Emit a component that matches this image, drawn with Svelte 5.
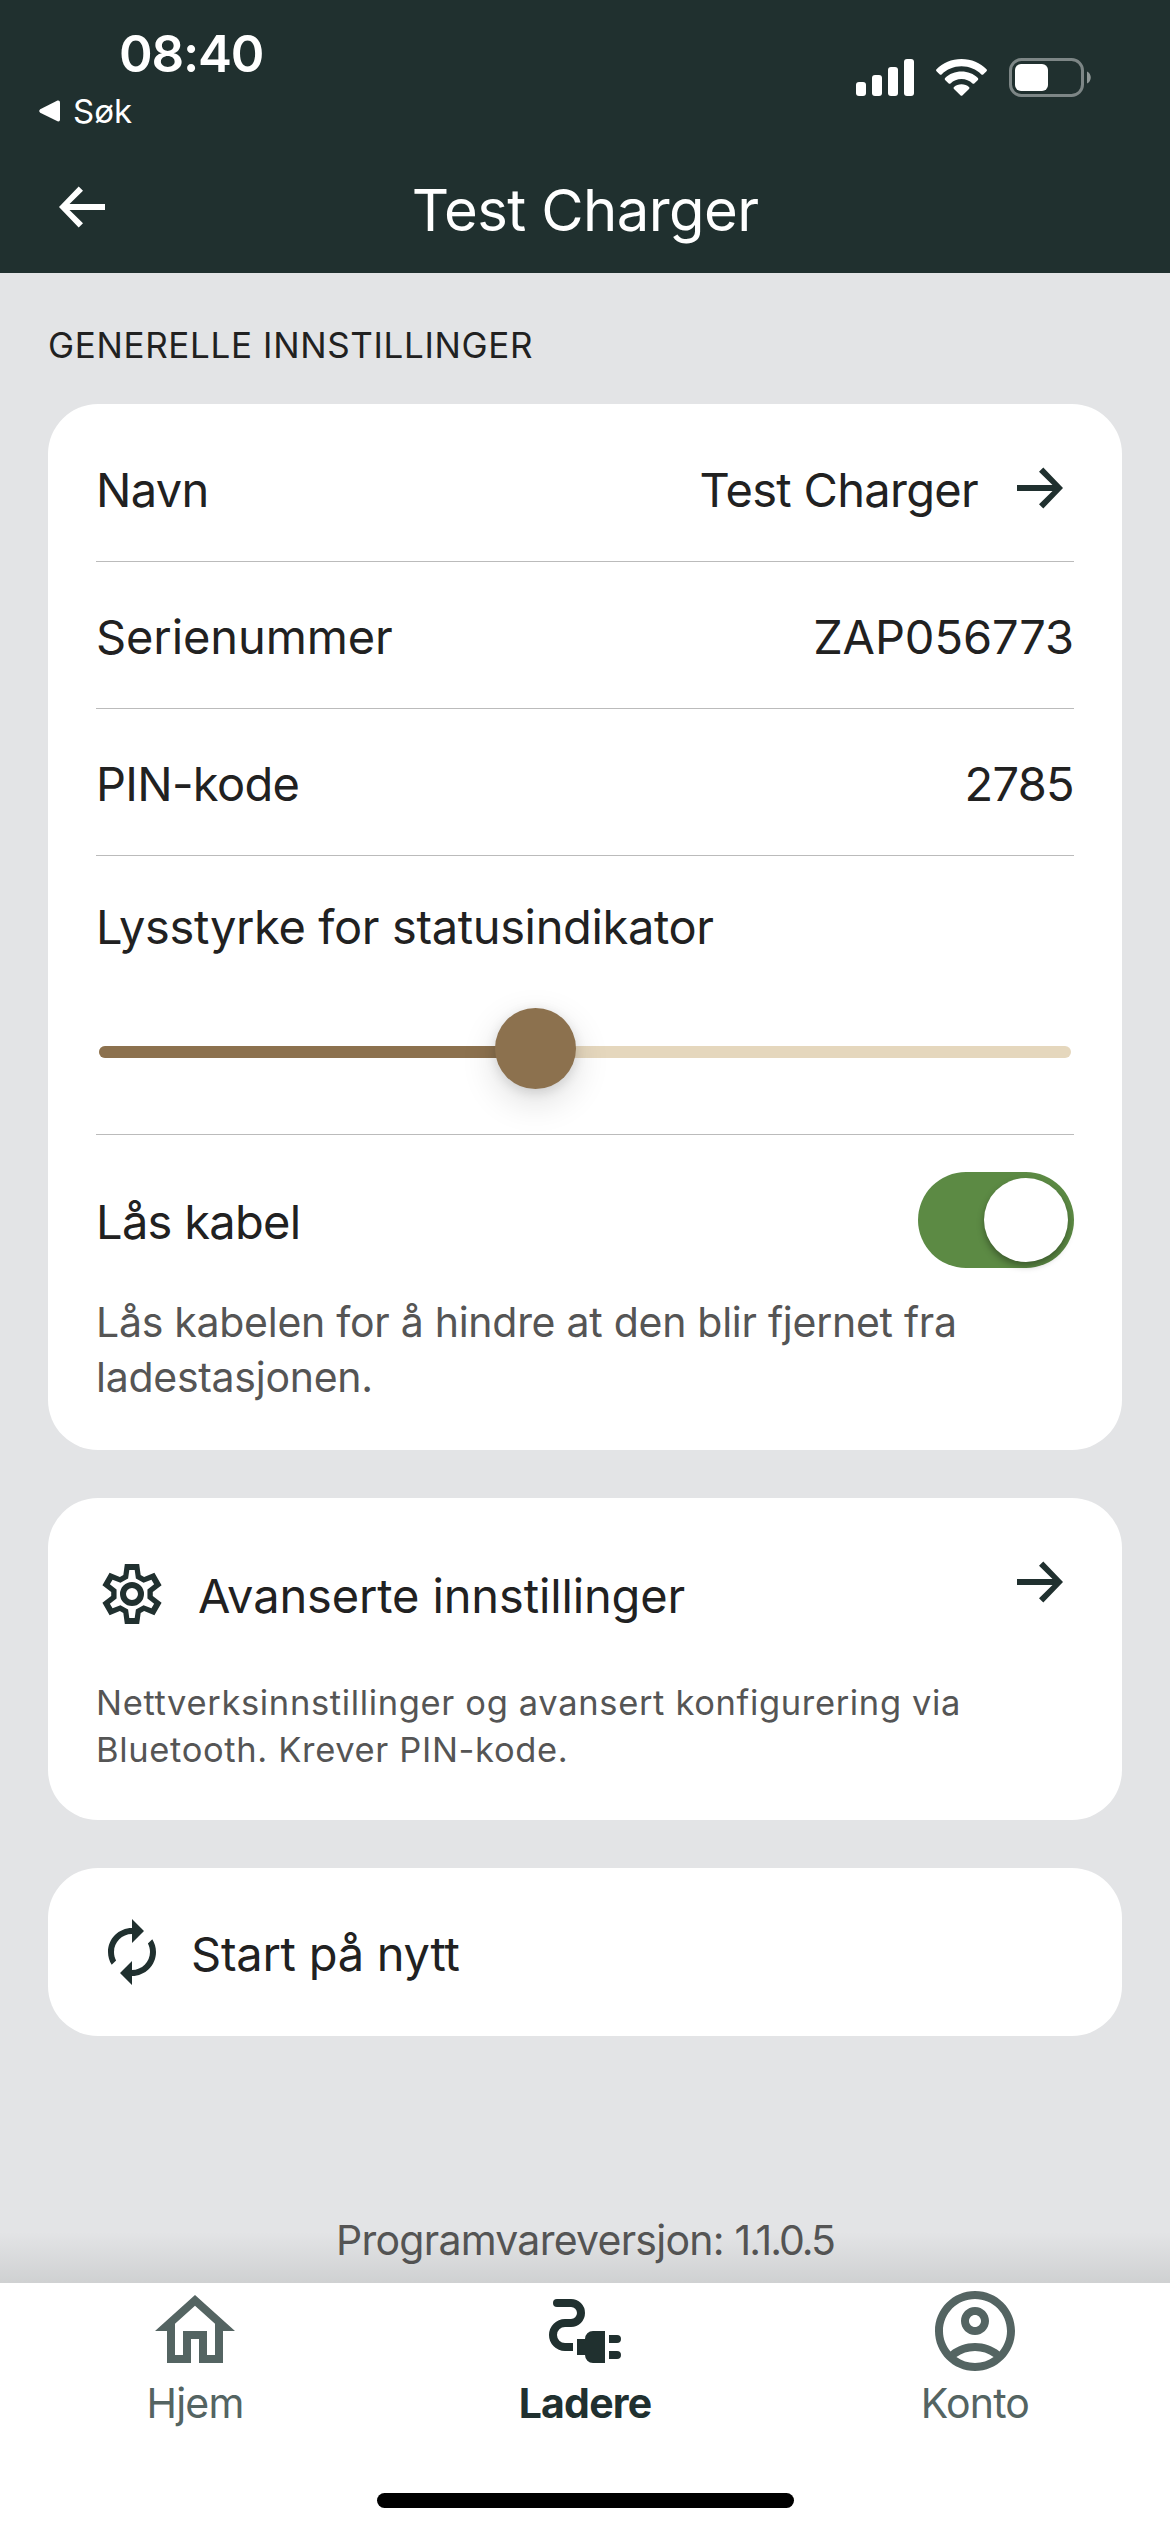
<script>
  // Charger settings screen
  let brightness = $state(45);
  let cableLocked = $state(true);

  const info = [
    { id: 'name', label: 'Navn', value: 'Test Charger', link: true },
    { id: 'serial', label: 'Serienummer', value: 'ZAP056773' },
    { id: 'pin', label: 'PIN-kode', value: '2785' }
  ];

  const tabs = [
    { id: 'home', label: 'Hjem' },
    { id: 'chargers', label: 'Ladere', active: true },
    { id: 'account', label: 'Konto' }
  ];

  const bars = [14, 21, 29, 37];

  // One tooth is given as [x, y] points above the centre, repeated six times
  function ring(tooth) {
    const points = [];
    for (let i = 0; i < 6; i++) {
      const a = (i * Math.PI) / 3;
      for (const [x, y] of tooth) {
        const px = 12 + x * Math.cos(a) - y * Math.sin(a);
        const py = 12 + x * Math.sin(a) + y * Math.cos(a);
        points.push(`${px.toFixed(2)} ${py.toFixed(2)}`);
      }
    }
    return `M${points.join('L')}z`;
  }

  const gear =
    ring([[-2.89, -6.33], [-2.39, -10], [2.39, -10], [2.89, -6.33]]) +
    ring([[-1.3, -5.2], [-0.9, -8], [0.9, -8], [1.3, -5.2]]);
</script>

{#snippet arrow()}
  <svg class="arrow" viewBox="0 0 72 72" aria-hidden="true">
    <path d="M15 33h35.500L37 19.800l4.300-4.300L61 36 41.300 56.500 37 52.200 50.500 39H15z" />
  </svg>
{/snippet}

<div class="screen">
  <header>
    <div class="status">
      <div class="status-left">
        <span class="time">08:40</span>
        <span class="back-app">
          <svg viewBox="0 0 22 22" aria-hidden="true"><path d="M1.200 9.200 18.500.600Q21 0 21 2.500v17Q21 22 18.500 21.300L1.200 12.700Q-.800 11 1.200 9.200z" /></svg>
          <span>Søk</span>
        </span>
      </div>
      <div class="status-right">
        <div class="signal">
          {#each bars as h}
            <i style="height: {h}px"></i>
          {/each}
        </div>
        <svg class="wifi" viewBox="0 0 51 37" aria-hidden="true">
          <path d="M25.500 0C35.500 0 44.300 3.900 50.500 10.200q.900 1 0 2L47.200 15.400q-.900.800-1.800 0C40.200 10.300 33.200 7.300 25.500 7.300S10.800 10.300 5.600 15.400q-.900.800-1.800 0L.500 12.200q-.900-1 0-2C6.700 3.900 15.500 0 25.500 0z" />
          <path d="M25.500 12.600c6.300 0 12.100 2.400 16.400 6.400q.900 1 0 2L38.300 24.400q-.900.800-1.800 0C33.600 21.700 29.700 20.100 25.500 20.100S17.400 21.700 14.500 24.400q-.900.800-1.800 0L9.100 21q-.900-1 0-2C13.400 15 19.200 12.600 25.500 12.600z" />
          <path d="M25.500 25.200c2.900 0 5.500 1 7.500 2.700q.900 1 0 2L26.600 36.200q-1.100 1.100-2.200 0L18 29.900q-.900-1 0-2C20 26.200 22.600 25.200 25.500 25.200z" />
        </svg>
        <svg class="battery" viewBox="0 0 83 39" aria-hidden="true">
          <rect x="1.500" y="1.500" width="72" height="36" rx="11" fill="none" stroke="#fff" stroke-opacity=".42" stroke-width="3" />
          <rect x="6" y="6" width="33" height="27" rx="6" />
          <path d="M78 13.500c5 2 5 10 0 12z" fill-opacity=".5" />
        </svg>
      </div>
    </div>
    <div class="bar">
      <button class="back" type="button" aria-label="Tilbake">{@render arrow()}</button>
      <h1>Test Charger</h1>
    </div>
  </header>

  <main>
    <h2>GENERELLE INNSTILLINGER</h2>

    <section class="card general">
      {#each info as row (row.id)}
        <div class="row {row.id}">
          <span>{row.label}</span>
          <span class="value">{row.value}</span>
          {#if row.link}
            {@render arrow()}
          {/if}
        </div>
      {/each}

      <div class="brightness">
        <span class="label">Lysstyrke for statusindikator</span>
        <div class="slider">
          <div class="track">
            <div class="fill" style="width: {brightness}%"></div>
          </div>
          <div class="thumb" style="left: {brightness}%"></div>
        </div>
      </div>

      <div class="lock">
        <span class="label">Lås kabel</span>
        <button
          class="toggle"
          class:on={cableLocked}
          type="button"
          role="switch"
          aria-checked={cableLocked}
          aria-label="Lås kabel"
          onclick={() => (cableLocked = !cableLocked)}
        ><span class="knob"></span></button>
      </div>
      <p class="lock-text">Lås kabelen for å hindre at den blir fjernet fra<br />ladestasjonen.</p>
    </section>

    <section class="card advanced">
      <div class="advanced-head">
        <svg class="icon" viewBox="0 0 24 24" aria-hidden="true">
          <path d={gear} fill-rule="evenodd" />
          <circle cx="12" cy="12" r="3" fill="none" stroke="currentColor" stroke-width="2" />
        </svg>
        <span>Avanserte innstillinger</span>
        {@render arrow()}
      </div>
      <p class="advanced-text">Nettverksinnstillinger og avansert konfigurering via<br />Bluetooth. Krever PIN-kode.</p>
    </section>

    <section class="card restart">
      <svg class="icon" viewBox="0 0 24 24" aria-hidden="true">
        <path d="M12 6v3l4-4-4-4v3c-4.420 0-8 3.580-8 8 0 1.570.46 3.030 1.240 4.260L6.700 14.800c-.45-.83-.7-1.790-.7-2.800 0-3.310 2.690-6 6-6zm6.760 1.740L17.300 9.200c.44.84.7 1.790.7 2.800 0 3.310-2.690 6-6 6v-3l-4 4 4 4v-3c4.420 0 8-3.580 8-8 0-1.570-.46-3.030-1.240-4.260z" />
      </svg>
      <span>Start på nytt</span>
    </section>

    <p class="version">Programvareversjon: <span>1.1.0.5</span></p>
  </main>

  <nav>
    {#each tabs as tab (tab.id)}
      <button class="tab {tab.id}" class:active={tab.active} type="button">
        <svg viewBox="0 0 24 24" aria-hidden="true">
          {#if tab.id === 'home'}
            <path d="M12 5.690l5 4.500V18h-2v-6H9v6H7v-7.810l5-4.500M12 3L2 12h3v8h6v-6h2v6h6v-8h3L12 3z" />
          {:else if tab.id === 'chargers'}
            <path d="M5 5h3.500a2.500 2.500 0 0 1 0 5H7a3 3 0 0 0 0 6h2" fill="none" stroke="currentColor" stroke-width="2" />
            <circle cx="5" cy="5" r="1" />
            <path d="M10 14h2a2 2 0 0 1 2-2h3v8h-3a2 2 0 0 1-2-2h-2zM18 13h2a1 1 0 0 1 0 2h-2zM18 17h2a1 1 0 0 1 0 2h-2z" />
          {:else}
            <path d="M12 2C6.480 2 2 6.480 2 12s4.480 10 10 10 10-4.480 10-10S17.520 2 12 2zM7.350 18.500C8.660 17.560 10.260 17 12 17s3.340.56 4.650 1.500c-1.310.94-2.910 1.500-4.650 1.500s-3.340-.56-4.650-1.500zm10.790-1.380C16.450 15.800 14.320 15 12 15s-4.450.8-6.140 2.120C4.700 15.730 4 13.950 4 12c0-4.420 3.580-8 8-8s8 3.580 8 8c0 1.950-.7 3.730-1.860 5.120zM12 6c-1.930 0-3.500 1.570-3.500 3.500S10.070 13 12 13s3.500-1.570 3.500-3.500S13.930 6 12 6zm0 5c-.83 0-1.500-.67-1.500-1.500S11.170 8 12 8s1.500.67 1.500 1.500S12.830 11 12 11z" />
          {/if}
        </svg>
        <span>{tab.label}</span>
      </button>
    {/each}
    <div class="home-indicator"></div>
  </nav>
</div>

<style>
  :global(body) {
    margin: 0;
    background: #e3e4e6;
  }

  .screen {
    display: flex;
    flex-direction: column;
    width: 1170px;
    height: 2532px;
    overflow: hidden;
    background: #e3e4e6;
    color: #212121;
    font-family: Inter, 'Liberation Sans', sans-serif;
    font-size: 47px;
    line-height: 60px;
  }

  svg {
    display: block;
    flex: none;
    fill: currentColor;
  }

  button {
    padding: 0;
    border: 0;
    background: none;
    color: inherit;
    font: inherit;
  }

  h1,
  h2,
  p {
    margin: 0;
    font-weight: 400;
  }

  header {
    height: 273px;
    flex: none;
    background: #20302f;
    color: #fff;
  }

  .status {
    display: flex;
    justify-content: space-between;
    height: 141px;
  }

  .status-left {
    display: flex;
    flex-direction: column;
    padding: 24px 0 0 39px;
  }

  .time {
    padding-left: 80px;
    font-size: 51px;
    font-weight: 600;
    line-height: 60px;
    letter-spacing: -1.200px;
  }

  .back-app {
    display: flex;
    align-items: center;
    gap: 12px;
    margin-top: 7px;
    font-size: 33px;
    line-height: 40px;
  }

  .back-app svg {
    width: 22px;
    height: 22px;
  }

  .status-right {
    display: flex;
    align-items: flex-start;
    padding: 58px 78px 0 0;
  }

  .signal {
    display: flex;
    align-items: flex-end;
    gap: 6px;
    height: 38px;
    margin-right: 22px;
  }

  .signal i {
    width: 10px;
    border-radius: 3px;
    background: #fff;
  }

  .wifi {
    width: 51px;
    height: 37px;
    margin: 1px 22px 0 0;
  }

  .battery {
    width: 83px;
    height: 39px;
  }

  .bar {
    display: grid;
    grid-template-columns: 72px 1fr 72px;
    align-items: center;
    height: 132px;
    padding: 0 48px;
  }

  .back .arrow {
    transform: scaleX(-1);
  }

  h1 {
    padding-top: 5px;
    font-size: 58px;
    line-height: 72px;
    letter-spacing: -0.600px;
    text-align: center;
  }

  .arrow {
    width: 72px;
    height: 72px;
  }

  .card .arrow {
    color: #20302f;
  }

  main {
    display: flex;
    flex-direction: column;
    height: 2010px;
    flex: none;
    padding: 0 48px;
    box-sizing: border-box;
  }

  h2 {
    padding: 48px 0 35px;
    font-size: 35px;
    line-height: 48px;
    letter-spacing: 0.650px;
  }

  .card {
    box-sizing: border-box;
    padding: 0 48px;
    border-radius: 50px;
    background: #fff;
  }

  .general {
    height: 1046px;
    padding-top: 11px;
  }

  .row {
    display: flex;
    align-items: center;
    height: 146px;
    border-bottom: 1px solid #bbb;
  }

  .row span {
    padding-top: 3px;
  }

  .row .value {
    margin-left: auto;
  }

  .row .arrow {
    margin-left: 24px;
  }

  .name,
  .pin {
    letter-spacing: -0.700px;
  }

  .serial {
    letter-spacing: -0.100px;
  }

  .brightness {
    padding: 41px 0 45px;
    border-bottom: 1px solid #bbb;
    letter-spacing: -0.360px;
  }

  .label {
    display: block;
  }

  .slider {
    position: relative;
    display: flex;
    align-items: center;
    height: 81px;
    margin: 51px 3px 0;
  }

  .track {
    width: 100%;
    height: 12px;
    margin-top: 7px;
    border-radius: 6px;
    background: #e5d7bd;
    overflow: hidden;
  }

  .fill {
    height: 12px;
    background: #8c714e;
  }

  .thumb {
    position: absolute;
    top: 0;
    width: 81px;
    height: 81px;
    margin-left: -41px;
    border-radius: 50%;
    background: #8c714e;
    box-shadow: 0 12px 36px rgba(0, 0, 0, 0.14), 0 3px 12px rgba(0, 0, 0, 0.12);
  }

  .lock {
    display: flex;
    align-items: center;
    justify-content: space-between;
    padding-top: 37px;
    letter-spacing: -0.700px;
  }

  .lock .label {
    padding-top: 3px;
  }

  .toggle {
    display: flex;
    align-items: center;
    width: 156px;
    height: 96px;
    padding: 0 6px;
    border-radius: 48px;
    background: #c4c6c8;
  }

  .toggle.on {
    justify-content: flex-end;
    background: #5c8a44;
  }

  .knob {
    width: 84px;
    height: 84px;
    border-radius: 50%;
    background: #fff;
    box-shadow: 0 4px 7px rgba(0, 0, 0, 0.35);
  }

  .lock-text {
    margin-top: 27px;
    color: #555;
    font-size: 41px;
    line-height: 55px;
    letter-spacing: -0.270px;
    white-space: nowrap;
  }

  .advanced {
    height: 322px;
    margin-top: 48px;
    padding-top: 48px;
  }

  .icon {
    width: 72px;
    height: 72px;
    color: #20302f;
  }

  .advanced-head {
    display: flex;
    align-items: center;
    height: 96px;
    letter-spacing: -0.130px;
  }

  .advanced-head span {
    padding: 3px 0 0 30px;
  }

  .advanced-head .arrow {
    align-self: flex-start;
    margin-left: auto;
  }

  .advanced-text {
    margin-top: 37px;
    color: #555;
    font-size: 34.500px;
    line-height: 47px;
    letter-spacing: 0.650px;
    white-space: nowrap;
  }

  .restart {
    display: flex;
    align-items: center;
    gap: 23px;
    height: 168px;
    margin-top: 48px;
    letter-spacing: -0.250px;
  }

  .restart span {
    padding-top: 3px;
  }

  .version {
    margin-top: 174px;
    color: #555;
    font-size: 41px;
    line-height: 60px;
    letter-spacing: -0.750px;
    text-align: center;
  }

  .version span {
    letter-spacing: -2px;
  }

  nav {
    position: relative;
    display: grid;
    grid-template-columns: repeat(3, 390px);
    grid-template-rows: 210px auto;
    flex: 1;
    background: #fff;
    color: #546462;
  }

  /* soft fade over the scrolled content */
  nav::before {
    content: '';
    position: absolute;
    left: 0;
    right: 0;
    bottom: 100%;
    height: 51px;
    background: linear-gradient(rgba(32, 48, 47, 0), rgba(32, 40, 32, 0.1));
  }

  .tab {
    display: flex;
    flex-direction: column;
    align-items: center;
    font-size: 41px;
    line-height: 48px;
    letter-spacing: -0.800px;
  }

  .tab svg {
    width: 96px;
    height: 96px;
  }

  .tab.active {
    color: #20302f;
    font-weight: 700;
  }

  .home-indicator {
    grid-column: 1 / -1;
    justify-self: center;
    width: 417px;
    height: 15px;
    border-radius: 8px;
    background: #000;
  }
</style>
